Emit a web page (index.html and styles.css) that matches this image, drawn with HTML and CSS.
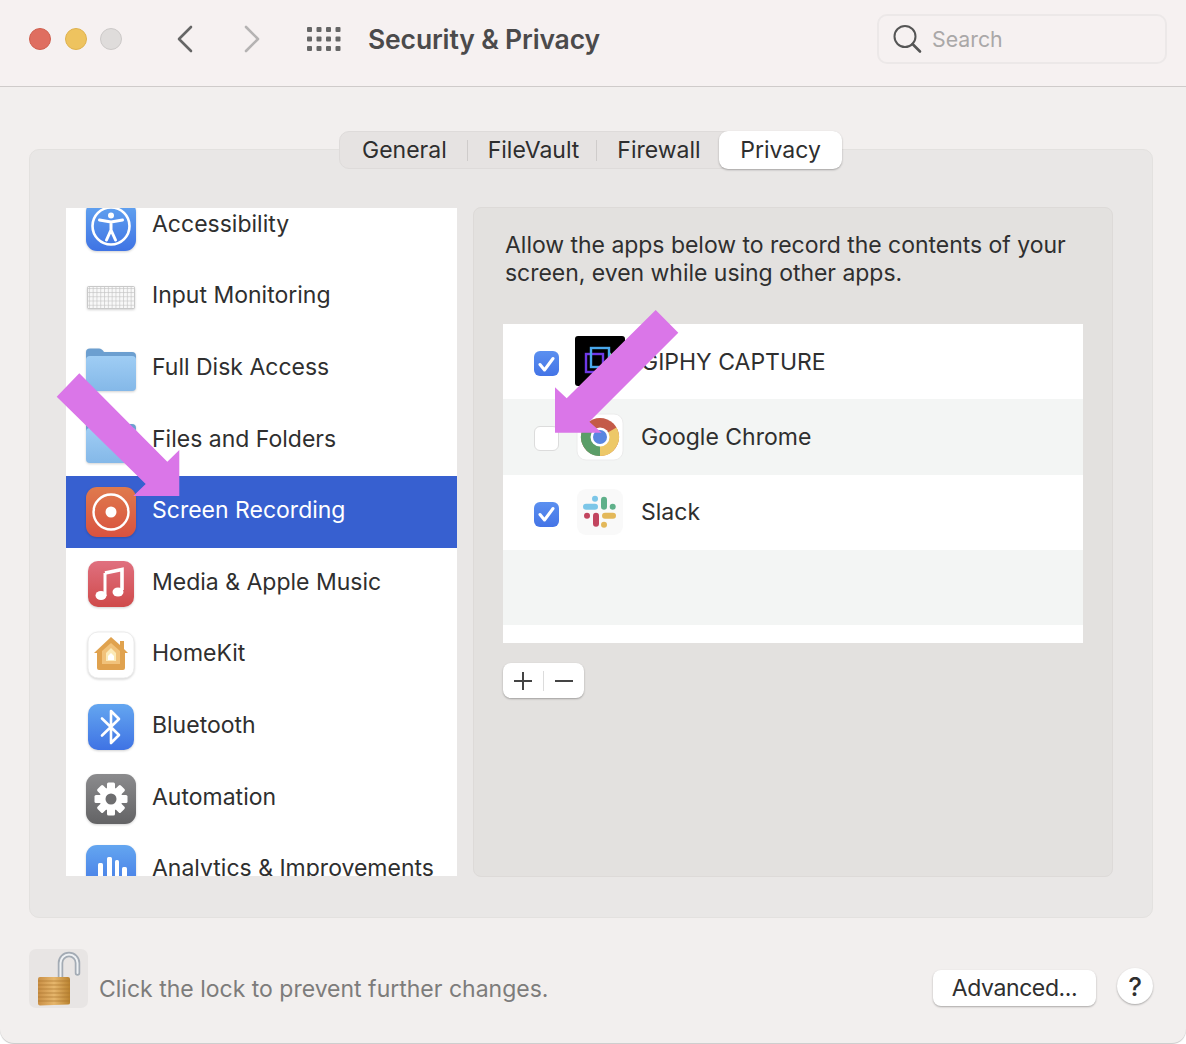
FILE: index.html
```html
<!DOCTYPE html>
<html lang="en">
<head>
<meta charset="utf-8">
<title>Security &amp; Privacy</title>
<link rel="stylesheet" href="styles.css">
</head>
<body>
<div class="window">
  <header class="titlebar">
    <div class="lights">
      <span class="light red"></span><span class="light yellow"></span><span class="light grey"></span>
    </div>
    <div class="nav">
      <svg class="chev" width="18" height="28" viewBox="0 0 18 28"><path d="M15 2 L3 14 L15 26" fill="none" stroke="#666" stroke-width="2.6" stroke-linecap="round" stroke-linejoin="round"/></svg>
      <svg class="chev" width="18" height="28" viewBox="0 0 18 28"><path d="M3 2 L15 14 L3 26" fill="none" stroke="#b5b3b3" stroke-width="2.6" stroke-linecap="round" stroke-linejoin="round"/></svg>
    </div>
    <svg class="grid" width="34" height="24" viewBox="0 0 34 24" fill="#666">
      <rect x="0" y="0" width="5" height="5" rx="1"/><rect x="9.5" y="0" width="5" height="5" rx="1"/><rect x="19" y="0" width="5" height="5" rx="1"/><rect x="28.5" y="0" width="5" height="5" rx="1"/>
      <rect x="0" y="9.5" width="5" height="5" rx="1"/><rect x="9.5" y="9.5" width="5" height="5" rx="1"/><rect x="19" y="9.5" width="5" height="5" rx="1"/><rect x="28.5" y="9.5" width="5" height="5" rx="1"/>
      <rect x="0" y="19" width="5" height="5" rx="1"/><rect x="9.5" y="19" width="5" height="5" rx="1"/><rect x="19" y="19" width="5" height="5" rx="1"/><rect x="28.5" y="19" width="5" height="5" rx="1"/>
    </svg>
    <h1 class="title">Security &amp; Privacy</h1>
    <div class="search">
      <svg width="30" height="30" viewBox="0 0 30 30"><circle cx="13" cy="12.500" r="10.500" fill="none" stroke="#555" stroke-width="2"/><path d="M20.500 20 L28 27.500" stroke="#555" stroke-width="2.600" stroke-linecap="round"/></svg>
      <span class="search-label">Search</span>
    </div>
  </header>

  <main class="content">
    <nav class="tabs">
      <span class="tab t-general">General</span><span class="tab-sep"></span>
      <span class="tab t-vault">FileVault</span><span class="tab-sep sep-vault"></span>
      <span class="tab t-fire">Firewall</span>
      <span class="tab tab-active">Privacy</span>
    </nav>
    <section class="panel">
      <div class="sidebar">
        <ul class="list">
          <li class="row">
            <svg class="icon" viewBox="0 0 50 50"><rect width="50" height="50" rx="11" fill="url(#gBlue)"/><circle cx="25" cy="25" r="18.500" fill="none" stroke="#fff" stroke-width="2.600"/><circle cx="25" cy="14.500" r="3" fill="#fff"/><path d="M13.500 19 L25 21 L36.500 19 M25 21 V29 M25 29 L20.500 39 M25 29 L29.500 39" fill="none" stroke="#fff" stroke-width="3" stroke-linecap="round" stroke-linejoin="round"/></svg>
            <span class="label">Accessibility</span>
          </li>
          <li class="row">
            <svg class="icon" viewBox="0 0 50 50"><rect x="1" y="14" width="48" height="23" rx="2" fill="#c9c9c9"/><rect x="2" y="15" width="46" height="21" fill="url(#keys)"/></svg>
            <span class="label">Input Monitoring</span>
          </li>
          <li class="row">
            <svg class="icon" viewBox="0 0 50 50"><use href="#folder"/></svg>
            <span class="label">Full Disk Access</span>
          </li>
          <li class="row">
            <svg class="icon" viewBox="0 0 50 50"><use href="#folder"/></svg>
            <span class="label">Files and Folders</span>
          </li>
          <li class="row row-active">
            <svg class="icon" viewBox="0 0 50 50"><rect width="50" height="50" rx="11" fill="url(#gOrange)"/><circle cx="25" cy="25" r="17.500" fill="none" stroke="#fff" stroke-width="2.400"/><circle cx="25" cy="25" r="5.500" fill="#fff"/></svg>
            <span class="label">Screen Recording</span>
          </li>
          <li class="row">
            <svg class="icon" viewBox="0 0 50 50"><rect x="2" y="2" width="46" height="46" rx="10" fill="url(#gRed)"/><path d="M19 14 L36 10.500 V31" fill="none" stroke="#fff" stroke-width="3.600"/><ellipse cx="15" cy="36.500" rx="5.500" ry="4.500" fill="#fff"/><ellipse cx="32" cy="33" rx="5.500" ry="4.500" fill="#fff"/><path d="M19 14 V37" stroke="#fff" stroke-width="3"/></svg>
            <span class="label">Media &amp; Apple Music</span>
          </li>
          <li class="row">
            <svg class="icon" viewBox="0 0 50 50"><rect x="2" y="2" width="46" height="46" rx="10" fill="#fff" stroke="#ececec"/><path d="M25 7 L34 15 V11 H38 V19 L42 23 H39 V38 Q39 40 37 40 H13 Q11 40 11 38 V23 H8 Z" fill="#e0a24e"/><path d="M25 13 L34 21 V34 H16 V21 Z" fill="#f1c27a"/><path d="M25 18 L30 23 V31 H20 V23 Z" fill="#fbeab8"/><path d="M25 23 L28 26 V30 H22 V26 Z" fill="#fff"/></svg>
            <span class="label">HomeKit</span>
          </li>
          <li class="row">
            <svg class="icon" viewBox="0 0 50 50"><rect x="2" y="2" width="46" height="46" rx="10" fill="url(#gBlue)"/><path d="M16 16.500 L33 33 L25 41 V9 L33 17 L16 33.500" fill="none" stroke="#fff" stroke-width="2.600" stroke-linecap="round" stroke-linejoin="round"/></svg>
            <span class="label">Bluetooth</span>
          </li>
          <li class="row">
            <svg class="icon" viewBox="0 0 50 50"><rect width="50" height="50" rx="11" fill="url(#gGrey)"/><g fill="#fff"><circle cx="25" cy="25" r="11.500"/><g id="teeth"><rect x="21" y="8.500" width="8" height="8" rx="1.500"/><rect x="21" y="33.500" width="8" height="8" rx="1.500"/><rect x="8.500" y="21" width="8" height="8" rx="1.500"/><rect x="33.500" y="21" width="8" height="8" rx="1.500"/></g><use href="#teeth" transform="rotate(45 25 25)"/></g><circle cx="25" cy="25" r="5.500" fill="#6d6d6f"/></svg>
            <span class="label">Automation</span>
          </li>
          <li class="row">
            <svg class="icon" viewBox="0 0 50 50"><rect width="50" height="50" rx="11" fill="url(#gBlue)"/><g fill="#fff"><rect x="12" y="18" width="5" height="24" rx="1.500"/><rect x="21" y="12" width="5" height="30" rx="1.500"/><rect x="29" y="15" width="4" height="27" rx="1.500"/><rect x="36" y="22" width="5" height="20" rx="1.500"/></g></svg>
            <span class="label">Analytics &amp; Improvements</span>
          </li>
        </ul>
      </div>

      <div class="detail">
        <p class="desc">Allow the apps below to record the contents of your screen, even while using other apps.</p>
        <div class="apps">
          <div class="app">
            <span class="check on"><svg width="17" height="16" viewBox="0 0 17 16"><path d="M2 8.500 L6.500 14 L15 2.500" fill="none" stroke="#fff" stroke-width="3" stroke-linecap="round" stroke-linejoin="round"/></svg></span>
            <svg class="app-icon giphy" viewBox="0 0 50 50"><rect width="50" height="50" rx="3" fill="#000"/><path d="M33 14 L38 20 L34 25 Z" fill="#7df29a"/><rect x="11" y="18" width="17" height="18" fill="none" stroke="#6e39e6" stroke-width="2.400"/><rect x="16" y="12" width="18" height="19" fill="none" stroke="#4aa8ec" stroke-width="2.400"/></svg>
            <span class="app-name giphy-name">GIPHY CAPTURE</span>
          </div>
          <div class="app app-alt">
            <span class="check"></span>
            <svg class="app-icon" viewBox="0 0 48 48"><rect x="1" y="1" width="46" height="46" rx="9" fill="#fff" stroke="#ececec"/><circle cx="24" cy="24" r="19" fill="#c45a48"/><path d="M24 24 L40.500 14.500 A19 19 0 0 1 24 43 Z" fill="#edc868"/><path d="M24 24 L24 43 A19 19 0 0 1 7.500 14.500 Z" fill="#5b9e68"/><circle cx="24" cy="24" r="9.500" fill="#fff"/><circle cx="24" cy="24" r="7" fill="#5a86e0"/></svg>
            <span class="app-name">Google Chrome</span>
          </div>
          <div class="app">
            <span class="check on"><svg width="17" height="16" viewBox="0 0 17 16"><path d="M2 8.500 L6.500 14 L15 2.500" fill="none" stroke="#fff" stroke-width="3" stroke-linecap="round" stroke-linejoin="round"/></svg></span>
            <svg class="app-icon" viewBox="0 0 48 48"><rect x="1" y="1" width="46" height="46" rx="9" fill="#f9f9f9"/><g fill="none" stroke-width="6" stroke-linecap="round"><path d="M10 18.700 H19" stroke="#7cc6e8"/><path d="M19 10.700 H19.010" stroke="#7cc6e8"/><path d="M28 11.700 V18.700" stroke="#5fb08a"/><path d="M36.700 18.700 H36.710" stroke="#5fb08a"/><path d="M29 27.700 H37" stroke="#e3b85a"/><path d="M28 36.700 H28.010" stroke="#e3b85a"/><path d="M20 27.700 V35.700" stroke="#c2455f"/><path d="M11 27.700 H11.010" stroke="#c2455f"/></g></svg>
            <span class="app-name">Slack</span>
          </div>
          <div class="app app-alt"></div>
          <div class="app-tail"></div>
        </div>
        <div class="addremove">
          <svg width="20" height="20" viewBox="0 0 20 20"><path d="M10 1 V19 M1 10 H19" stroke="#444" stroke-width="2"/></svg>
          <span class="ar-sep"></span>
          <svg width="20" height="20" viewBox="0 0 20 20"><path d="M1 10 H19" stroke="#444" stroke-width="2"/></svg>
        </div>
      </div>
    </section>

    <footer class="footer">
      <div class="lock">
        <svg width="59" height="59" viewBox="0 0 59 59">
          <path d="M31.500 29 V14 A8.500 8.500 0 0 1 48.500 14 V24" fill="none" stroke="#a3abb4" stroke-width="5.500" stroke-linecap="round"/>
          <path d="M31.500 29 V14 A8.500 8.500 0 0 1 48.500 14 V24" fill="none" stroke="#eef1f4" stroke-width="2" stroke-linecap="round"/>
          <path d="M9 30 Q9 28 11 28 H39 Q41 28 41 30 V54 Q41 55.500 39 55.500 L11 56.500 Q9 56.500 9 54.500 Z" fill="url(#gGold)"/>
          <g stroke="#a9742e" stroke-width="1" opacity=".65"><path d="M9 32H41M9 36H41M9 40H41M9 44H41M9 48H41M9 52H41"/></g>
        </svg>
      </div>
      <span class="lock-text">Click the lock to prevent further changes.</span>
      <button class="advanced" type="button">Advanced...</button>
      <button class="help" type="button">?</button>
    </footer>
  </main>

  <svg class="arrows" width="1186" height="1044" viewBox="0 0 1186 1044" aria-hidden="true">
    <path d="M56.700 396.700 L79.300 373.300 L167.300 461.700 L179.300 450 V496 H133.300 L145.700 484 Z" fill="#da76e8"/>
    <path d="M655.700 310 L678.300 332.700 L589.300 421.700 L601.700 432.700 H555 V387.300 L566.700 398.300 Z" fill="#da76e8"/>
  </svg>

  <svg class="defs" width="0" height="0" aria-hidden="true">
    <defs>
      <linearGradient id="gBlue" x1="0" y1="0" x2="0" y2="1"><stop offset="0" stop-color="#64a6f0"/><stop offset="1" stop-color="#3f73e4"/></linearGradient>
      <linearGradient id="gOrange" x1="0" y1="0" x2="0" y2="1"><stop offset="0" stop-color="#df7a4d"/><stop offset="1" stop-color="#d9523f"/></linearGradient>
      <linearGradient id="gRed" x1="0" y1="0" x2="0" y2="1"><stop offset="0" stop-color="#e0707f"/><stop offset="1" stop-color="#cf4a4a"/></linearGradient>
      <linearGradient id="gGrey" x1="0" y1="0" x2="0" y2="1"><stop offset="0" stop-color="#8b8b8d"/><stop offset="1" stop-color="#636365"/></linearGradient>
      <linearGradient id="gGold" x1="0" y1="0" x2="1" y2="0"><stop offset="0" stop-color="#c98f45"/><stop offset=".5" stop-color="#e6b66c"/><stop offset="1" stop-color="#b9822f"/></linearGradient>
      <linearGradient id="gFolder" x1="0" y1="0" x2="0" y2="1"><stop offset="0" stop-color="#9fcdf4"/><stop offset="1" stop-color="#84b8e8"/></linearGradient>
      <pattern id="keys" width="3.800" height="4.200" patternUnits="userSpaceOnUse"><rect width="3.100" height="3.500" rx=".5" fill="#f8f8f8"/></pattern>
      <g id="folder">
        <path d="M0 8 Q0 4.500 4 4.500 H13 Q16 4.500 18 8 H46 Q50 8 50 12 V24 H0 Z" fill="#6c9fd0"/>
        <rect x="0" y="12" width="50" height="35" rx="4" fill="url(#gFolder)"/>
      </g>
    </defs>
  </svg>
</div>
</body>
</html>
```

FILE: styles.css
```css
* { box-sizing: border-box; }
html, body { margin: 0; padding: 0; }
body {
  width: 1186px;
  height: 1044px;
  background: #fff;
  overflow: hidden;
  font-family: "Inter", "Liberation Sans", sans-serif;
  color: #2f2f2f;
}
.window {
  position: relative;
  width: 1186px;
  height: 1043px;
  display: flex;
  flex-direction: column;
  background: #f2efee;
  border-radius: 0 0 14px 14px;
  box-shadow: 0 1px 1px #c9c9c9;
}
.titlebar {
  height: 87px;
  flex: none;
  display: flex;
  align-items: center;
  padding: 0 19px 8px 29px;
  background: #f6f1f1;
  border-bottom: 1px solid #cfcbca;
}
.lights { display: flex; gap: 13.500px; }
.light { width: 22px; height: 22px; border-radius: 50%; }
.red { background: #df6e60; border: 1px solid #d0604f; }
.yellow { background: #eec35f; border: 1px solid #dfb24e; }
.grey { background: #dfdcdb; border: 1px solid #ccc9c8; }
.nav { display: flex; gap: 49px; margin-left: 54px; }
.chev { display: block; }
.grid { margin-left: 46px; display: block; }
.title {
  margin: 0 0 0 27px;
  font-size: 26.500px;
  font-weight: 600;
  color: #4b4a4b;
  letter-spacing: -0.15px;
  white-space: nowrap;
}
.search {
  margin-left: auto;
  width: 290px;
  height: 50px;
  display: flex;
  align-items: center;
  gap: 10px;
  padding-left: 13px;
  border: 2px solid #ece8e8;
  border-radius: 10px;
}
.search-label { font-size: 21.300px; color: #aaa8a8; }

.content { flex: 1; display: flex; flex-direction: column; align-items: flex-start; padding: 44px 0 0 29px; }
.tabs {
  position: relative;
  z-index: 1;
  width: 503px;
  height: 38px;
  margin: 0 0 -20px 310px;
  display: flex;
  align-items: center;
  background: #e6e3e2;
  border: 1px solid #dedbda;
  border-radius: 10px;
  font-size: 23px;
  color: #2e2e2e;
  white-space: nowrap;
}
.tab { display: block; }
.t-general { margin-left: 22px; }
.t-vault { margin-left: 20px; }
.t-fire { margin-left: 20px; }
.tab-sep { width: 1px; height: 21px; background: #cfcccb; margin-left: 20px; }
.sep-vault { margin-left: 17px; }
.tab-active {
  margin-left: auto;
  width: 123px;
  height: 38px;
  margin-right: -1px;
  text-align: center;
  line-height: 38px;
  background: #fff;
  border-radius: 9px;
  box-shadow: 0 1px 2px rgba(0,0,0,.3);
}
.panel {
  width: 1124px;
  height: 769px;
  flex: none;
  display: flex;
  align-items: flex-start;
  gap: 16px;
  padding: 58px 0 0 36px;
  background: #e9e7e6;
  border: 1px solid #e3e1df;
  border-radius: 10px;
}
.sidebar { width: 391px; height: 668px; flex: none; background: #fff; overflow: hidden; }
.list { list-style: none; margin: -18px 0 0; padding: 0; }
.row {
  height: 71.600px;
  display: flex;
  align-items: center;
  gap: 16px;
  padding-left: 20px;
  font-size: 23px;
  color: #2f2f2f;
  white-space: nowrap;
}
.label { margin-bottom: 4px; }
.row-active { background: #3760d0; color: #fff; }
.icon { width: 50px; height: 50px; flex: none; display: block; filter: drop-shadow(0 1px 1px rgba(0,0,0,.18)); }

.detail {
  width: 640px;
  height: 670px;
  margin-top: -1px;
  flex: none;
  padding: 23px 29px 0 29px;
  background: #e3e1df;
  border: 1px solid #dddad8;
  border-radius: 8px;
}
.desc {
  margin: 0;
  width: 590px;
  padding-left: 2px;
  font-size: 23px;
  line-height: 28px;
  letter-spacing: -0.03px;
  color: #2f2f2f;
}
.apps { width: 580px; margin-top: 37px; background: #fff; }
.app {
  height: 75.300px;
  display: flex;
  align-items: center;
  padding-left: 31px;
}
.app-alt { background: #f3f5f4; }
.app-tail { height: 18px; }
.check {
  width: 25px;
  height: 25px;
  flex: none;
  display: flex;
  align-items: center;
  justify-content: center;
  margin-top: 4px;
  border-radius: 6px;
  background: #fff;
  border: 1px solid #dcdcdc;
}
.check.on { background: linear-gradient(#5b90f0, #4474e6); border: none; }
.app-icon { width: 48px; height: 48px; flex: none; margin-left: 17px; display: block; }
.app-icon.giphy { width: 50px; height: 50px; margin: 0 0 2px 16px; }
.app-name { margin-left: 17px; font-size: 23px; color: #2f2f2f; white-space: nowrap; }
.giphy-name { margin-left: 16px; }
.addremove {
  width: 81px;
  height: 35px;
  margin-top: 20px;
  display: flex;
  align-items: center;
  justify-content: center;
  gap: 10px;
  background: #fff;
  border-radius: 8px;
  box-shadow: 0 1px 2px rgba(0,0,0,.3);
}
.ar-sep { width: 1px; height: 20px; background: #dcdcdc; }

.footer {
  width: 1124px;
  margin-top: 31px;
  display: flex;
  align-items: flex-start;
}
.lock { width: 59px; height: 59px; background: #e8e5e4; border-radius: 7px; flex: none; }
.lock-text { margin: 26px 0 0 11px; font-size: 23px; color: #7d7c7b; white-space: nowrap; }
.advanced {
  margin: 21px 0 0 auto;
  width: 163px;
  height: 36px;
  padding: 0;
  background: #fff;
  border: none;
  border-radius: 8px;
  box-shadow: 0 1px 2px rgba(0,0,0,.3);
  font: inherit;
  font-size: 23px;
  letter-spacing: -0.4px;
  color: #2f2f2f;
}
.help {
  margin: 19px 0 0 21px;
  width: 36px;
  height: 36px;
  padding: 0;
  background: #fff;
  border: none;
  border-radius: 50%;
  box-shadow: 0 1px 2px rgba(0,0,0,.3);
  font: inherit;
  font-size: 26px;
  font-weight: 500;
  color: #2f2f2f;
}
.arrows { position: absolute; left: 0; top: 0; z-index: 5; pointer-events: none; }
.defs { position: absolute; }
```
